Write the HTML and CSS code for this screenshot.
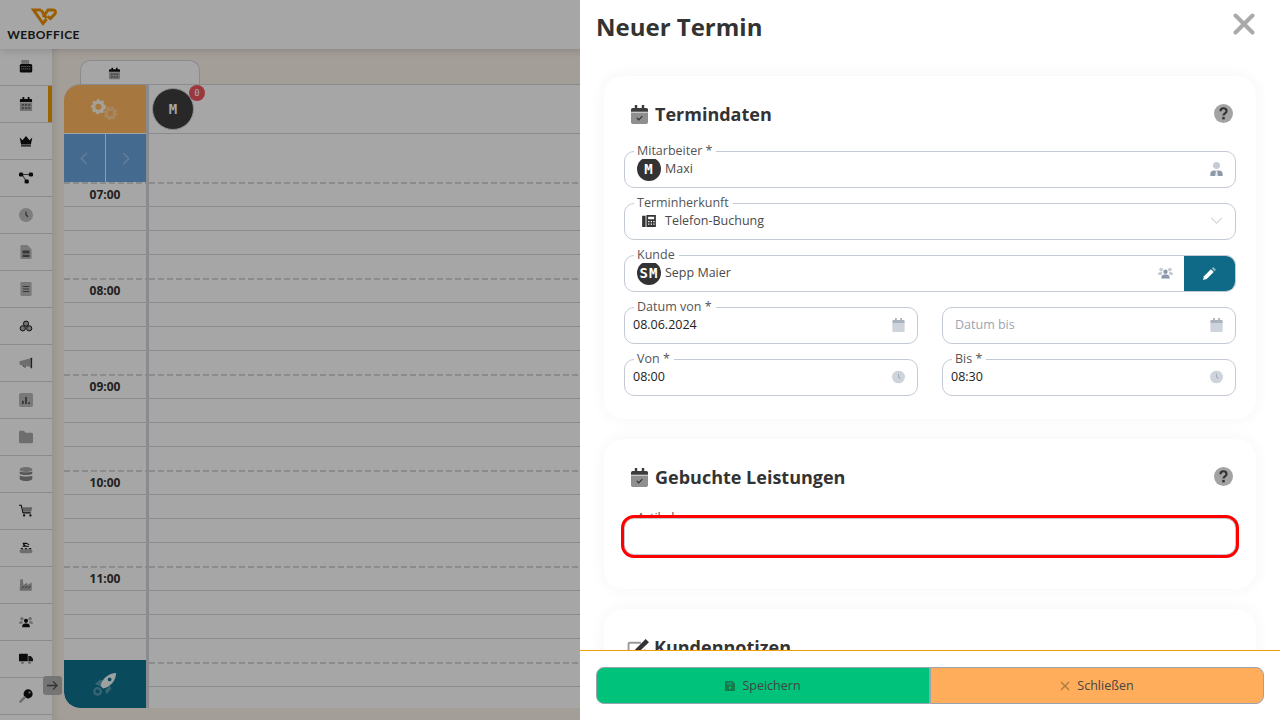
FILE: index.html
```html
<!DOCTYPE html>
<html lang="de">
<head>
    <meta charset="UTF-8">
    <title>Neuer Termin</title>
    <link rel="stylesheet" href="styles.css">
</head>
<body>
    <svg class="sprite">
        <symbol id="i-cal-check" viewBox="0 0 18 20">
            <path fill="#3c3c3c" d="M4 0h2.600v3H11.400V0H14v3h2.300A1.700 1.700 0 0 1 18 4.700V7H0V4.700A1.700 1.700 0 0 1 1.700 3H4z"/>
            <path fill="#8f8f8f" d="M0 8h18v10.300a1.700 1.700 0 0 1-1.700 1.700H1.700A1.700 1.700 0 0 1 0 18.300z"/>
            <path fill="none" stroke="#333" stroke-width="1.300" d="M6 13.500l2.200 2.300 3.800-4"/>
        </symbol>
        <symbol id="i-cal-grid" viewBox="0 0 18 20">
            <path fill="#111" d="M4 0h2.600v3H11.400V0H14v3h2.300A1.700 1.700 0 0 1 18 4.700V7H0V4.700A1.700 1.700 0 0 1 1.700 3H4z"/>
            <path fill="#b0b0b0" d="M0 8h18v10.300a1.700 1.700 0 0 1-1.700 1.700H1.700A1.700 1.700 0 0 1 0 18.300z"/>
            <path fill="#666" d="M3 10h3v2.500H3zm4.500 0h3v2.500h-3zm4.500 0h3v2.500h-3zM3 14.500h3V17H3zm4.500 0h3V17h-3zm4.500 0h3V17h-3z"/>
        </symbol>
        <symbol id="i-cal-plain" viewBox="0 0 18 20">
            <path fill="#a9b2bf" d="M4 0h2.600v3H11.400V0H14v3h2.300A1.700 1.700 0 0 1 18 4.700V7H0V4.700A1.700 1.700 0 0 1 1.700 3H4z"/>
            <path fill="#cfd4dc" d="M0 7h18v11.300a1.700 1.700 0 0 1-1.700 1.700H1.700A1.700 1.700 0 0 1 0 18.300z"/>
        </symbol>
        <symbol id="i-clock" viewBox="0 0 20 20">
            <circle cx="10" cy="10" r="10" fill="#cfd4dc"/>
            <path fill="none" stroke="#a0a9b6" stroke-width="1.600" d="M10 5v5l3 2.500"/>
        </symbol>
        <symbol id="i-user-tie" viewBox="0 0 18 20">
            <circle cx="9" cy="5" r="5" fill="#c6ccd5"/>
            <path fill="#8d99aa" d="M0 20v-3c0-3 2.500-5 5.500-5h7c3 0 5.500 2 5.500 5v3z"/>
            <path fill="#e8ebef" d="M7.500 12h3L10 14l1 6H7l1-6z"/>
        </symbol>
        <symbol id="i-users" viewBox="0 0 24 18">
            <circle cx="5" cy="3.500" r="3" fill="#c6ccd5"/>
            <circle cx="19" cy="3.500" r="3" fill="#c6ccd5"/>
            <path fill="#c6ccd5" d="M0 11c0-2.500 2-3.500 4-3.500h2.500L6 12H0zm24 0c0-2.500-2-3.500-4-3.500h-2.500L18 12h6z"/>
            <circle cx="12" cy="7" r="3.500" fill="#8d99aa"/>
            <path fill="#8d99aa" d="M5.500 18v-2c0-3 2.500-4.500 4.500-4.500h4c2 0 4.500 1.500 4.500 4.500v2z"/>
        </symbol>
        <symbol id="i-help" viewBox="0 0 20 20">
            <circle cx="10" cy="10" r="10" fill="#a3a3a3"/>
            <path fill="none" stroke="#333" stroke-width="2.300" d="M6.800 7.600c0-4.200 6.400-4 6.400-.2 0 2.600-3.200 2.400-3.200 4.800"/>
            <rect x="8.700" y="13.600" width="2.600" height="2.600" fill="#333"/>
        </symbol>
    </svg>

    <div class="app">
        <header class="topbar">
            <div class="logo">
                <svg class="logo-mark" viewBox="0 0 26 18">
                    <path fill="none" stroke="#ef9000" stroke-width="3" d="M10 2H2.500L12 15.500l3.500-4.500M10 2l5.500 8"/>
                    <path fill="none" stroke="#ef9000" stroke-width="3" d="M12 9l5-7h5.500c2 0 2.500 2.500 1.200 4L19.500 10.500 16.500 8.500"/>
                </svg>
                <span class="logo-text">WEBOFFICE</span>
            </div>
        </header>

        <div class="workspace">
            <nav class="sidebar">
                <div class="side-item"><svg viewBox="0 0 18 18"><rect x="3" y="0" width="10" height="5" fill="#aaa"/><rect x="1" y="5" width="16" height="11" rx="2" fill="#111"/><path fill="none" stroke="#bbb" stroke-width="1.200" stroke-dasharray="1.500 1" d="M3 8.500h12M3 11.500h12"/></svg></div>
                <div class="side-item active"><svg viewBox="0 0 18 20"><use href="#i-cal-grid"/></svg></div>
                <div class="side-item"><svg viewBox="0 0 20 16"><path fill="#111" d="M1 3l4 4 5-6 5 6 4-4-2 10H3zM3 14h14v2H3z"/></svg></div>
                <div class="side-item"><svg viewBox="0 0 20 18"><path stroke="#555" stroke-width="1.500" fill="none" d="M4 4h12M4 4l7 10"/><rect x="0" y="1" width="6" height="6" rx="2" fill="#111"/><rect x="14" y="1" width="6" height="6" rx="2" fill="#111"/><rect x="8" y="11" width="6" height="6" rx="2" fill="#111"/></svg></div>
                <div class="side-item"><svg viewBox="0 0 20 20"><circle cx="10" cy="10" r="10" fill="#c0c0c0"/><path fill="none" stroke="#444" stroke-width="1.600" d="M10 5v5l3 2.500"/></svg></div>
                <div class="side-item"><svg viewBox="0 0 16 20"><path fill="#bbb" d="M1.500 0H10l6 6v12.500a1.500 1.500 0 0 1-1.500 1.500h-13A1.500 1.500 0 0 1 0 18.500v-17A1.500 1.500 0 0 1 1.500 0z"/><path fill="#555" d="M3 8h10v4H3zM3 14h10v3H3z"/></svg></div>
                <div class="side-item"><svg viewBox="0 0 16 20"><rect width="16" height="20" rx="1.500" fill="#bbb"/><path fill="none" stroke="#555" stroke-width="1.500" d="M3.500 6.500h9M3.500 10h9M3.500 13.500h9"/></svg></div>
                <div class="side-item"><svg viewBox="0 0 24 20"><g fill="#aaa" stroke="#111" stroke-width="1.600"><circle cx="12" cy="6" r="4.500"/><circle cx="6.500" cy="14" r="4.500"/><circle cx="17.500" cy="14" r="4.500"/></g></svg></div>
                <div class="side-item"><svg viewBox="0 0 24 20"><path fill="#aaa" d="M1 7l19-5v15L1 13z"/><rect x="20" y="1" width="2.500" height="18" rx="1" fill="#333"/><path fill="none" stroke="#333" stroke-width="1.500" d="M7 14a3 3 0 0 0 5 2"/></svg></div>
                <div class="side-item"><svg viewBox="0 0 18 18"><rect width="18" height="18" rx="2.500" fill="#bbb"/><path fill="#444" d="M4 10h2v4H4zm4-5h2v9H8zm4 7h2v2h-2z"/></svg></div>
                <div class="side-item"><svg viewBox="0 0 20 18"><path fill="#aaa" d="M0 2a2 2 0 0 1 2-2h5l2.500 3H18a2 2 0 0 1 2 2v11a2 2 0 0 1-2 2H2a2 2 0 0 1-2-2z"/></svg></div>
                <div class="side-item"><svg viewBox="0 0 18 20"><ellipse cx="9" cy="3.500" rx="9" ry="3.500" fill="#aaa"/><path fill="#888" d="M0 6c2 2 16 2 18 0v3.500c-2 2.500-16 2.500-18 0z"/><path fill="#888" d="M0 12c2 2 16 2 18 0v5c-2 4-16 4-18 0z"/></svg></div>
                <div class="side-item"><svg viewBox="0 0 22 20"><path fill="none" stroke="#111" stroke-width="1.800" d="M0 1h3.500l3 12h12"/><path fill="#999" d="M5 4h16l-2 7H7z"/><circle cx="8" cy="17" r="1.800" fill="#111"/><circle cx="18" cy="17" r="1.800" fill="#111"/></svg></div>
                <div class="side-item"><svg viewBox="0 0 24 20"><path fill="#111" d="M6 1h7l5 3-1 1-4-2H9l3 3h5v2H6V6h2z"/><rect x="1" y="12" width="22" height="7" rx="3.500" fill="#aaa"/><path fill="#333" d="M3 10h4v2H3zm7 0h4v2h-4zm7 0h4v2h-4z"/></svg></div>
                <div class="side-item"><svg viewBox="0 0 22 20"><path fill="#aaa" d="M2 1h4l1 9 6-4v4l7-4v13H1z"/><path fill="none" stroke="#333" stroke-width="1.300" d="M5 15l3-3M10 15l3-3M15 15l3-3"/></svg></div>
                <div class="side-item"><svg viewBox="0 0 24 18"><circle cx="5" cy="3.500" r="3" fill="#aaa"/><circle cx="19" cy="3.500" r="3" fill="#aaa"/><path fill="#aaa" d="M0 11c0-2.500 2-3.500 4-3.500h2.500L6 12H0zm24 0c0-2.500-2-3.500-4-3.500h-2.500L18 12h6z"/><circle cx="12" cy="7" r="3.500" fill="#111"/><path fill="#111" d="M5.500 18v-2c0-3 2.500-4.500 4.500-4.500h4c2 0 4.500 1.500 4.500 4.500v2z"/></svg></div>
                <div class="side-item"><svg viewBox="0 0 24 18"><rect y="0" width="15" height="13" rx="1" fill="#111"/><path fill="#222" d="M16 4h4l4 4v5h-8z"/><circle cx="6" cy="15" r="2.700" fill="#aaa"/><circle cx="18" cy="15" r="2.700" fill="#aaa"/></svg></div>
                <div class="side-item"><svg viewBox="0 0 20 20"><circle cx="13" cy="7" r="6.500" fill="#111"/><circle cx="15" cy="5" r="1.500" fill="#bbb"/><path stroke="#aaa" stroke-width="3.500" stroke-linecap="round" d="M8 12l-6 6"/></svg></div>
                <div class="side-item"></div>
            </nav>

            <main class="main">
                <div class="tab">
                    <svg class="tab-icon" viewBox="0 0 18 20"><use href="#i-cal-grid"/></svg>
                </div>
                <div class="calendar">
                    <div class="time-col">
                        <div class="cal-head settings-cell">
                            <svg class="gears" viewBox="0 0 32 24">
                                <g fill="none">
                                    <circle cx="10" cy="9" r="5" stroke="#fff" stroke-width="3.500" opacity=".85"/>
                                    <circle cx="10" cy="9" r="7" stroke="#fff" stroke-width="2" stroke-dasharray="2.500 2.700" opacity=".85"/>
                                    <circle cx="23" cy="16" r="4.500" stroke="#fff" stroke-width="3.500" opacity=".3"/>
                                    <circle cx="23" cy="16" r="6.500" stroke="#fff" stroke-width="2" stroke-dasharray="2.500 2.600" opacity=".3"/>
                                </g>
                            </svg>
                        </div>
                        <div class="cal-nav nav-cells">
                            <div class="nav-btn"><svg viewBox="0 0 8 14"><path d="M7 1L1 7l6 6"/></svg></div>
                            <div class="nav-btn"><svg viewBox="0 0 8 14"><path d="M1 1l6 6-6 6"/></svg></div>
                        </div>
                        <div class="hour"><span class="hour-label">07:00</span></div>
                        <div class="hour"><span class="hour-label">08:00</span></div>
                        <div class="hour"><span class="hour-label">09:00</span></div>
                        <div class="hour"><span class="hour-label">10:00</span></div>
                        <div class="hour"><span class="hour-label">11:00</span></div>
                        <div class="hour"></div>
                    </div>
                    <div class="staff-col">
                        <div class="cal-head staff-head">
                            <div class="staff-avatar">M<span class="badge">0</span></div>
                        </div>
                        <div class="cal-nav"></div>
                        <div class="hour"></div>
                        <div class="hour"></div>
                        <div class="hour"></div>
                        <div class="hour"></div>
                        <div class="hour"></div>
                        <div class="hour"></div>
                    </div>
                    <div class="rocket-cell">
                        <svg viewBox="0 0 26 26">
                            <path fill="#fff" opacity=".3" d="M2 13l6-5 4 2-5 5zM13 20l5-5 2 3-5 6z"/>
                            <circle cx="5" cy="21" r="3.500" fill="none" stroke="#fff" stroke-width="2.400" opacity=".3"/>
                            <path fill="#fff" d="M8 15C10 7 17 1 25 1c0 8-6 15-14 17z" opacity=".95"/>
                            <circle cx="18" cy="8" r="2" fill="#0f7290"/>
                        </svg>
                    </div>
                </div>
            </main>
        </div>
    </div>

    <div class="backdrop"></div>
    <div class="side-toggle">
        <svg viewBox="0 0 14 12"><path d="M1 6h11M7.500 1.500L12 6l-4.500 4.500"/></svg>
    </div>

    <aside class="drawer">
        <div class="drawer-head">
            <h1>Neuer Termin</h1>
            <svg class="close-icon" viewBox="0 0 22 22"><path d="M2.500 2.500l17 17M19.500 2.500l-17 17"/></svg>
        </div>

        <div class="drawer-body">
            <section class="card">
                <div class="card-title">
                    <svg class="title-icon" viewBox="0 0 18 20"><use href="#i-cal-check"/></svg>
                    <h2>Termindaten</h2>
                    <svg class="help-icon" viewBox="0 0 20 20"><use href="#i-help"/></svg>
                </div>
                <div class="fields">
                    <div class="field">
                        <span class="field-label">Mitarbeiter *</span>
                        <span class="avatar">M</span>
                        <span class="field-value">Maxi</span>
                        <svg class="field-icon" viewBox="0 0 18 20"><use href="#i-user-tie"/></svg>
                    </div>
                    <div class="field">
                        <span class="field-label">Terminherkunft</span>
                        <svg class="phone-icon" viewBox="0 0 16 14">
                            <path fill="#333" d="M0 1h4v13H0zM5 0h11v14H5z"/>
                            <path fill="#fff" d="M7 2h7v3H7zM7 7h1.500v1.500H7zm3 0h1.500v1.500H10zm3 0h1.500v1.500H13zm-6 3h1.500v1.500H7zm3 0h1.500v1.500H10zm3 0h1.500v1.500H13z"/>
                        </svg>
                        <span class="field-value">Telefon-Buchung</span>
                        <svg class="chevron" viewBox="0 0 14 8"><path d="M1 1l6 6 6-6"/></svg>
                    </div>
                    <div class="field field-action">
                        <span class="field-label">Kunde</span>
                        <span class="avatar">SM</span>
                        <span class="field-value">Sepp Maier</span>
                        <svg class="users-icon" viewBox="0 0 24 18"><use href="#i-users"/></svg>
                        <div class="edit-btn">
                            <svg viewBox="0 0 14 14"><path fill="#fff" d="M0 14l1-4 7.500-7.500 3 3L4 13z"/><path fill="#8fb8c8" d="M9.500 1.500L11 0l3 3-1.500 1.500z"/></svg>
                        </div>
                    </div>
                    <div class="field-row">
                        <div class="field">
                            <span class="field-label">Datum von *</span>
                            <span class="field-value plain">08.06.2024</span>
                            <svg class="field-icon" viewBox="0 0 18 20"><use href="#i-cal-plain"/></svg>
                        </div>
                        <div class="field">
                            <span class="field-value placeholder">Datum bis</span>
                            <svg class="field-icon" viewBox="0 0 18 20"><use href="#i-cal-plain"/></svg>
                        </div>
                    </div>
                    <div class="field-row">
                        <div class="field">
                            <span class="field-label">Von *</span>
                            <span class="field-value plain">08:00</span>
                            <svg class="field-icon" viewBox="0 0 20 20"><use href="#i-clock"/></svg>
                        </div>
                        <div class="field">
                            <span class="field-label">Bis *</span>
                            <span class="field-value plain">08:30</span>
                            <svg class="field-icon" viewBox="0 0 20 20"><use href="#i-clock"/></svg>
                        </div>
                    </div>
                </div>
            </section>

            <section class="card card-booked">
                <div class="card-title">
                    <svg class="title-icon" viewBox="0 0 18 20"><use href="#i-cal-check"/></svg>
                    <h2>Gebuchte Leistungen</h2>
                    <svg class="help-icon" viewBox="0 0 20 20"><use href="#i-help"/></svg>
                </div>
                <div class="field field-invalid">
                    <span class="field-label">Artikel</span>
                </div>
            </section>

            <section class="card">
                <div class="card-title">
                    <svg class="title-icon notes-icon" viewBox="0 0 24 20">
                        <path fill="none" stroke="#999" stroke-width="2" d="M18 12v6a1 1 0 0 1-1 1H2a1 1 0 0 1-1-1V6a1 1 0 0 1 1-1h12"/>
                        <path fill="#333" d="M8 12l11-11 3.500 3.500L11 15.500l-4 1z"/>
                    </svg>
                    <h2>Kundennotizen</h2>
                </div>
            </section>
        </div>

        <div class="drawer-foot">
            <button class="btn btn-save">
                <svg viewBox="0 0 12 12"><path fill="#137a52" d="M1.500 0h7.500L12 3v7.500a1.500 1.500 0 0 1-1.500 1.500h-9A1.500 1.500 0 0 1 0 10.500v-9A1.500 1.500 0 0 1 1.500 0z"/><rect x="2.500" y="1.500" width="6" height="3" fill="#00c27a" opacity=".5"/><circle cx="6" cy="8" r="1.500" fill="#0c3"/></svg>
                Speichern
            </button>
            <button class="btn btn-close">
                <svg viewBox="0 0 10 10"><path fill="none" stroke="#a87a40" stroke-width="1.300" d="M1 1l8 8M9 1l-8 8"/></svg>
                Schließen
            </button>
        </div>
    </aside>
</body>
</html>
```

FILE: styles.css
```css
* {
    box-sizing: border-box;
}
html, body {
    margin: 0;
    height: 100%;
    overflow: hidden;
}
body {
    font-family: "Open Sans", sans-serif;
    color: #333;
    background-color: #fff;
}
.sprite {
    display: none;
}
.app {
    display: flex;
    flex-direction: column;
    height: 720px;
}
.topbar {
    height: 49px;
    flex-shrink: 0;
    background-color: #fff;
    box-shadow: 0 2px 8px rgba(0, 0, 0, 0.15);
    padding: 8px 0 0 8px;
    position: relative;
}
.logo {
    display: flex;
    flex-direction: column;
    align-items: center;
    width: 71px;
}
.logo-mark {
    width: 26px;
    height: 18px;
    margin-bottom: 2px;
}
.logo-text {
    font-family: "Lato", sans-serif;
    font-weight: 700;
    font-size: 12px;
    line-height: 14px;
    letter-spacing: 0.4px;
    color: #222;
    white-space: nowrap;
}
.workspace {
    display: flex;
    flex: 1;
    min-height: 0;
}
.sidebar {
    width: 52px;
    flex-shrink: 0;
    background-color: #fff;
    overflow: hidden;
}
.side-item {
    height: 37px;
    display: flex;
    align-items: center;
    justify-content: center;
    border-bottom: 1px solid #d4d6da;
}
.side-item svg {
    width: 14px;
    height: 14px;
}
.side-item.active {
    box-shadow: inset -4px 0 0 #ef9a00;
}
.main {
    flex: 1;
    min-width: 0;
    display: flex;
    flex-direction: column;
    padding: 11px 0 12px 12px;
    background-color: #fbf3ea;
    box-shadow: inset 6px 0 6px -3px rgba(0, 0, 0, 0.08);
}
.tab {
    width: 120px;
    height: 24px;
    margin-left: 16px;
    padding: 6px 0 0 28px;
    background-color: #fff;
    border: 1px solid #d4d6da;
    border-bottom: none;
    border-radius: 10px 10px 0 0;
}
.tab-icon {
    display: block;
    width: 11px;
    height: 13px;
}
.calendar {
    flex: 1;
    min-height: 0;
    display: flex;
    position: relative;
    overflow: hidden;
    border-top: 1px solid #d4d6da;
    border-radius: 16px 0 0 16px;
    background-color: #fff;
}
.time-col {
    width: 85px;
    flex-shrink: 0;
    border-right: 3px solid #d4d6da;
}
.staff-col {
    flex: 1;
}
.cal-head {
    height: 49px;
    border-bottom: 1px solid #d4d6da;
}
.settings-cell {
    display: flex;
    align-items: center;
    justify-content: center;
    background-color: #ffb760;
    border-bottom-color: #fff;
}
.gears {
    width: 30px;
    height: 23px;
    margin-left: -3px;
}
.cal-nav {
    height: 48px;
}
.nav-cells {
    display: flex;
    background-color: #69a3dc;
}
.nav-btn {
    flex: 1;
    display: flex;
    align-items: center;
    justify-content: center;
}
.nav-btn + .nav-btn {
    border-left: 1px solid #e8eef5;
}
.nav-btn svg {
    width: 8px;
    height: 13px;
    fill: none;
    stroke: #9cc0e6;
    stroke-width: 1.500;
}
.hour {
    height: 96px;
    padding-top: 2px;
    background:
        repeating-linear-gradient(to right, #d4d6da 0 6px, transparent 6px 9px) 0 0 / 100% 2px no-repeat,
        repeating-linear-gradient(to bottom, #d4d6da 0 1px, transparent 1px 24px) 0 24px / 100% 73px no-repeat;
    text-align: center;
}
.hour-label {
    display: block;
    font-size: 12px;
    font-weight: 700;
    line-height: 22px;
    color: #333;
}
.staff-head {
    padding: 3px 0 0 3px;
}
.staff-avatar {
    position: relative;
    width: 42px;
    height: 42px;
    border-radius: 50%;
    background-color: #3e3e3e;
    border: 1px solid #d4d6da;
    color: #fff;
    font-family: "DejaVu Sans Mono", monospace;
    font-size: 14px;
    font-weight: 700;
    line-height: 40px;
    text-align: center;
}
.badge {
    position: absolute;
    top: -4px;
    right: -12px;
    width: 16px;
    height: 16px;
    border-radius: 50%;
    background-color: #f0555f;
    font-size: 9px;
    line-height: 16px;
    color: #fff;
    font-weight: 400;
}
.rocket-cell {
    position: absolute;
    left: 0;
    bottom: 0;
    width: 82px;
    height: 48px;
    display: flex;
    align-items: center;
    justify-content: center;
    background-color: #0f7290;
    border-radius: 0 0 0 16px;
}
.rocket-cell svg {
    width: 24px;
    height: 24px;
}
.backdrop {
    position: absolute;
    top: 0;
    left: 0;
    right: 0;
    bottom: 0;
    background-color: rgba(0, 0, 0, 0.35);
}
.side-toggle {
    position: absolute;
    left: 43px;
    top: 676px;
    width: 19px;
    height: 19px;
    border-radius: 3px;
    background-color: #757575;
    display: flex;
    align-items: center;
    justify-content: center;
}
.side-toggle svg {
    width: 13px;
    height: 11px;
    fill: none;
    stroke: #333;
    stroke-width: 1.400;
}
.drawer {
    position: absolute;
    top: 0;
    right: 0;
    bottom: 0;
    width: 700px;
    display: flex;
    flex-direction: column;
    background-color: #fff;
}
.drawer-head {
    height: 54px;
    flex-shrink: 0;
    display: flex;
    align-items: center;
    justify-content: space-between;
    padding: 0 26px 2px 16px;
}
.drawer-head h1 {
    margin: 0;
    font-size: 24px;
    font-weight: 700;
    color: #333;
}
.close-icon {
    width: 22px;
    height: 22px;
    margin-top: -4px;
    margin-right: -1px;
    fill: none;
    stroke: #aaa;
    stroke-width: 4;
    stroke-linecap: round;
}
.drawer-body {
    flex: 1;
    min-height: 0;
    overflow: hidden;
    padding: 22px 24px 0;
    display: flex;
    flex-direction: column;
    gap: 20px;
}
.card {
    flex-shrink: 0;
    padding: 24px 20px 23px;
    border-radius: 20px;
    background-color: #fff;
    box-shadow: 0 0 16px rgba(40, 50, 70, 0.05);
}
.card-booked {
    padding-bottom: 34px;
}
.card-title {
    display: flex;
    align-items: center;
    height: 28px;
    padding-left: 7px;
    margin-bottom: 23px;
}
.card-booked .card-title {
    margin-bottom: 27px;
}
.title-icon {
    width: 17px;
    height: 19px;
    margin-right: 7px;
}
.notes-icon {
    width: 24px;
    margin-left: -4px;
    margin-right: 3px;
}
.card-title h2 {
    margin: 0;
    flex: 1;
    font-size: 18px;
    font-weight: 700;
    color: #333;
}
.help-icon {
    width: 19px;
    height: 19px;
    margin: -2px 3px 0 0;
}
.fields {
    display: flex;
    flex-direction: column;
    gap: 15px;
}
.field-row {
    display: grid;
    grid-template-columns: 1fr 1fr;
    gap: 24px;
}
.field {
    position: relative;
    height: 37px;
    display: flex;
    align-items: center;
    padding: 0 12px 2px 8px;
    border: 1px solid #c4cad3;
    border-radius: 10px;
    background-color: #fff;
    font-size: 12.500px;
    color: #4a4a4a;
}
.field-label {
    position: absolute;
    top: -9px;
    left: 9px;
    padding: 0 4px 0 3px;
    font-size: 12.500px;
    line-height: 16px;
    color: #555;
    background-color: #fff;
}
.avatar {
    flex-shrink: 0;
    width: 24px;
    height: 24px;
    margin: 1px 4px 0 4px;
    border-radius: 50%;
    background-color: #333;
    color: #fff;
    font-family: "DejaVu Sans Mono", monospace;
    font-size: 14px;
    font-weight: 700;
    line-height: 24px;
    letter-spacing: 1px;
    text-align: center;
    white-space: nowrap;
}
.field-value {
    flex: 1;
    white-space: nowrap;
}
.field-value.plain {
    color: #222;
}
.field-value.placeholder {
    padding-left: 4px;
    color: #9aa5b5;
}
.field-icon {
    width: 13px;
    height: 14px;
}
.phone-icon {
    width: 14px;
    height: 12px;
    margin: 0 9px 0 9px;
}
.chevron {
    width: 13px;
    height: 7px;
    fill: none;
    stroke: #cfd4dc;
    stroke-width: 1.300;
}
.field-action {
    padding-right: 0;
}
.users-icon {
    width: 15px;
    height: 12px;
    margin-right: 11px;
}
.edit-btn {
    align-self: flex-start;
    width: 51px;
    height: 35px;
    display: flex;
    align-items: center;
    justify-content: center;
    background-color: #0f6a87;
    border-radius: 0 9px 9px 0;
}
.edit-btn svg {
    width: 13px;
    height: 13px;
}
.field-invalid::after {
    content: "";
    position: absolute;
    top: -1px;
    left: -1px;
    right: -1px;
    bottom: -1px;
    background-color: #fff;
    border: 1px solid #c4cad3;
    border-radius: 10px;
    outline: 3px solid #f00;
}
.drawer-foot {
    height: 70px;
    flex-shrink: 0;
    display: flex;
    padding: 16px 16px 0;
    border-top: 1px solid #f29f05;
    background-color: #fff;
}
.btn {
    flex: 1;
    height: 37px;
    display: flex;
    align-items: center;
    justify-content: center;
    gap: 7px;
    border: 1px solid #9aa3ad;
    font-family: "Open Sans", sans-serif;
    font-size: 12.500px;
    color: #444;
}
.btn svg {
    width: 10px;
    height: 10px;
}
.btn-save {
    background-color: #00c27a;
    border-radius: 8px 0 0 8px;
}
.btn-close {
    background-color: #ffad5a;
    border-radius: 0 8px 8px 0;
}
```
